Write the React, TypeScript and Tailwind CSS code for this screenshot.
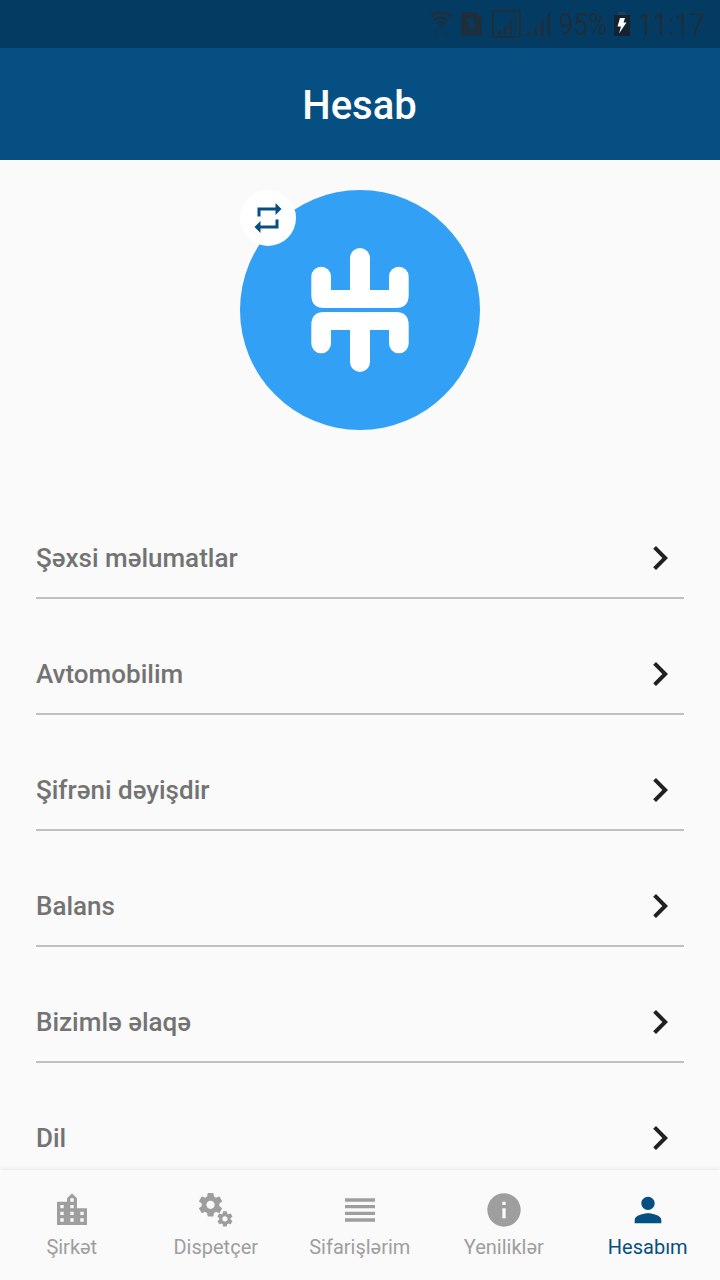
import type { ReactNode } from 'react'
import { MdChevronRight, MdRepeat } from 'react-icons/md'

const menuItems = ['Şəxsi məlumatlar', 'Avtomobilim', 'Şifrəni dəyişdir', 'Balans', 'Bizimlə əlaqə', 'Dil']

const gearPath =
  'M19.43 12.98c.04-.32.07-.64.07-.98s-.03-.66-.07-.98l2.11-1.65c.19-.15.24-.42.12-.64l-2-3.46c-.12-.22-.39-.3-.61-.22l-2.49 1c-.52-.4-1.08-.73-1.69-.98l-.38-2.65C14.46 2.18 14.25 2 14 2h-4c-.25 0-.46.18-.49.42l-.38 2.65c-.61.25-1.17.59-1.69.98l-2.49-1c-.23-.09-.49 0-.61.22l-2 3.46c-.13.22-.07.49.12.64l2.11 1.65c-.04.32-.07.65-.07.98s.03.66.07.98l-2.11 1.65c-.19.15-.24.42-.12.64l2 3.46c.12.22.39.3.61.22l2.49-1c.52.4 1.08.73 1.69.98l.38 2.65c.03.24.24.42.49.42h4c.25 0 .46-.18.49-.42l.38-2.65c.61-.25 1.17-.59 1.69-.98l2.49 1c.23.09.49 0 .61-.22l2-3.46c.12-.22.07-.49-.12-.64l-2.11-1.65zM12 15.5c-1.93 0-3.5-1.57-3.5-3.5s1.57-3.5 3.5-3.5 3.5 1.57 3.5 3.5-1.57 3.5-3.5 3.5z'

type Tab = { label: string; icon: ReactNode; active?: boolean }

const tabs: Tab[] = [
  {
    label: 'Şirkət',
    icon: (
      <path d="M15 11V5l-3-3-3 3v2H3v14h18V11h-6zm-8 8H5v-2h2v2zm0-4H5v-2h2v2zm0-4H5V9h2v2zm6 8h-2v-2h2v2zm0-4h-2v-2h2v2zm0-4h-2V9h2v2zm0-4h-2V5h2v2zm6 12h-2v-2h2v2zm0-4h-2v-2h2v2z" />
    ),
  },
  {
    label: 'Dispetçer',
    icon: (
      <>
        <path d={gearPath} transform="translate(.2 .35) scale(.71)" />
        <path d={gearPath} transform="translate(11.85 11.8) scale(.46)" />
      </>
    ),
  },
  {
    label: 'Sifarişlərim',
    icon: <path d="M3 15h18v-2H3v2zm0 4h18v-2H3v2zm0-8h18V9H3v2zm0-6v2h18V5H3z" />,
  },
  {
    label: 'Yeniliklər',
    icon: (
      <path d="M12 2C6.48 2 2 6.48 2 12s4.48 10 10 10 10-4.48 10-10S17.52 2 12 2zm1 15h-2v-6h2v6zm0-8h-2V7h2v2z" />
    ),
  },
  {
    label: 'Hesabım',
    icon: (
      <path d="M12 12c2.21 0 4-1.79 4-4s-1.79-4-4-4-4 1.79-4 4 1.79 4 4 4zm0 2c-2.67 0-8 1.34-8 4v2h16v-2c0-2.66-5.33-4-8-4z" />
    ),
    active: true,
  },
]

function StatusBar() {
  return (
    <div className="flex h-12 shrink-0 items-center justify-end bg-[#043b62] pr-[15px] text-[#1d2f3c]">
      <svg width="22" height="26" viewBox="0 0 22 26" fill="none" stroke="currentColor" strokeWidth="2.4">
        <path d="M.7 5.5Q11-2.500 21.300 5.500M4 9.500Q11 3.500 18 9.500M7 13Q11 9.500 15 13" />
        <path d="M8.500 14.500q2.500-1.500 5 0L11 17z" fill="currentColor" stroke="none" />
        <path d="M6.500 17.500l3 4h-2v3h-2v-3h-2zM15.500 25l-3-4h2v-3h2v3h2z" fill="currentColor" stroke="none" opacity=".5" />
      </svg>
      <svg className="ml-[9px]" width="21" height="24" viewBox="0 0 21 24">
        <path d="M1 0h14l6 6v16.500q0 1-1 1H1q-1 0-1-1V1q0-1 1-1z" fill="currentColor" />
        <path d="M6 7.500L10 6h2.500v12.500H9.500V9.500L6 10z" fill="#043b62" />
      </svg>
      <svg className="ml-[10px]" width="29" height="28" viewBox="0 0 29 28">
        <rect x="1" y="1" width="27" height="26" rx="1.500" fill="none" stroke="currentColor" strokeWidth="2" />
        <path d="M5 24v-1.500L9 19.500V24zM11.500 24v-6l3-3v9zM17 24V12.500l3-3V24z" fill="currentColor" />
        <path d="M22 24V8l2.500-3v19z" fill="currentColor" opacity=".5" />
      </svg>
      <svg className="ml-[5px]" width="24" height="24" viewBox="0 0 24 24" fill="currentColor">
        <path d="M0 24v-1.500L4 19v5zM8 24v-8l3-3v11zM14.500 24V10l3-3v17zM21 24V3l3-3v24z" />
      </svg>
      <span className="ml-[9px] w-[50px] text-[31px] leading-none whitespace-nowrap">
        <span className="inline-block origin-left scale-x-[.845]">95%</span>
      </span>
      <svg className="ml-[5px]" width="16" height="24" viewBox="0 0 16 24">
        <path d="M4 0h8v3H4z" fill="#1d4058" />
        <path d="M0 3h16v21H0z" fill="#14232f" />
        <path d="M6 6h5L9.500 10.500H12.500L5 21.500 7 14.500H3.500z" fill="#fff" />
      </svg>
      <span className="ml-2 w-[67px] text-[31px] leading-none whitespace-nowrap">
        <span className="inline-block origin-left scale-x-[.87]">11:17</span>
      </span>
    </div>
  )
}

function Avatar() {
  return (
    <div className="relative mx-auto mt-[30px] size-60 shrink-0">
      <svg className="size-60" viewBox="0 0 240 240">
        <circle cx="120" cy="120" r="120" fill="#32a0f4" />
        <g fill="#fff">
          <path d="M71.300 86.500a9.850 9.850 0 0 1 19.700 0V100h19V68a10 10 0 0 1 20 0v32h19V86.500a9.850 9.850 0 0 1 19.700 0V105q0 13-13 13H84.300q-13 0-13-13z" />
          <path d="M71.300 153.500a9.850 9.850 0 0 0 19.700 0V140h19v32a10 10 0 0 0 20 0v-32h19v13.500a9.850 9.850 0 0 0 19.700 0V135q0-13-13-13H84.300q-13 0-13 13z" />
        </g>
      </svg>
      <button className="absolute top-0 left-0 flex size-14 items-center justify-center rounded-full bg-white text-[#064f83]">
        <MdRepeat size={36} />
      </button>
    </div>
  )
}

export default function App() {
  return (
    <div className="flex h-[1280px] w-[720px] flex-col overflow-hidden bg-[#fafafa] font-[Roboto,sans-serif]">
      <StatusBar />
      <header className="flex h-28 shrink-0 items-center justify-center bg-[#064f83] pt-1 pr-px">
        <h1 className="text-[40px] leading-none font-medium text-white">Hesab</h1>
      </header>

      <main className="flex min-h-0 flex-1 flex-col overflow-hidden">
        <Avatar />
        <ul className="mt-[53px] px-9">
          {menuItems.map((item) => (
            <li key={item} className="flex h-[116px] items-end justify-between border-b-2 border-[#c1c1c1] pb-[15px]">
              <span className="text-[26px] leading-[48px] font-medium text-[#737373]">{item}</span>
              <MdChevronRight size={48} className="text-[#212121]" />
            </li>
          ))}
        </ul>
      </main>

      <nav className="z-10 grid h-[110px] shrink-0 grid-cols-5 bg-[#fafafa] shadow-[0_-2px_4px_rgba(0,0,0,0.06)]">
        {tabs.map((tab) => (
          <a
            key={tab.label}
            className={`flex flex-col items-center pt-5 ${tab.active ? 'text-[#064f83]' : 'text-[#9e9e9e]'}`}
          >
            <svg width="40" height="40" viewBox="0 0 24 24" fill="currentColor">
              {tab.icon}
            </svg>
            <span className="mt-[5px] pr-[0.5px] text-[20px] leading-6">{tab.label}</span>
          </a>
        ))}
      </nav>
    </div>
  )
}
